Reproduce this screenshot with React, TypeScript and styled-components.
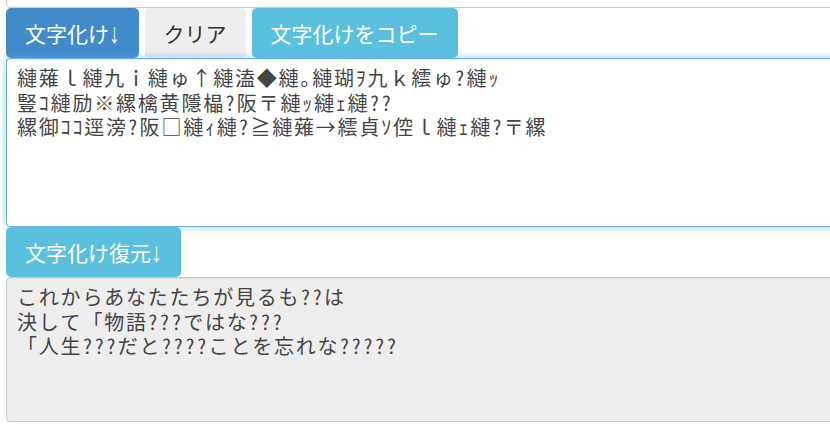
import React from "react";
import styled, { createGlobalStyle } from "styled-components";

const GlobalStyle = createGlobalStyle`
  html, body {
    margin: 0;
    padding: 0;
    overflow: hidden;
    background: #fff;
  }
`;

const Page = styled.div`
  display: flex;
  flex-direction: column;
  width: 900px;
  margin-top: -150px;
  padding-left: 6px;
  font-family: "Noto Sans CJK JP", "Noto Sans", sans-serif;
`;

const ButtonRow = styled.div`
  display: flex;
  gap: 6px;
`;

const variants = {
  primary: { bg: "#428bca", fg: "#fff" },
  default: { bg: "#eeeeee", fg: "#333" },
  info: { bg: "#5bc0de", fg: "#fff" },
};

const Button = styled.button<{ $variant: keyof typeof variants }>`
  display: flex;
  align-items: center;
  height: 50px;
  padding: 0 19px;
  border: none;
  border-radius: 5px;
  background: ${(p) => variants[p.$variant].bg};
  color: ${(p) => variants[p.$variant].fg};
  font-family: "Noto Sans CJK JP", sans-serif;
  font-size: 21px;
  white-space: nowrap;
  cursor: pointer;
`;

// the arrow is a narrow, tall glyph in the original font
const Arrow = styled.span`
  display: inline-block;
  font-family: "Liberation Sans", sans-serif;
  transform: translateY(1px) scaleY(1.35);
`;

const TextBox = styled.textarea<{ $focused?: boolean; $readOnlyLook?: boolean; $h: number }>`
  box-sizing: border-box;
  display: block;
  width: 100%;
  height: ${(p) => p.$h}px;
  margin: 0;
  padding: 7px 10px;
  border: 1px solid ${(p) => (p.$focused ? "#66afe9" : "#cccccc")};
  border-radius: 4px;
  outline: none;
  resize: vertical;
  background: ${(p) => (p.$readOnlyLook ? "#eeeeee" : "#fff")};
  color: #444;
  font-family: "Noto Sans Mono CJK JP", "Noto Sans CJK JP", monospace;
  font-size: 20px;
  letter-spacing: 1.8px;
  line-height: 24.5px;
  overflow: hidden;
  box-shadow: ${(p) =>
    p.$focused
      ? "inset 0 1px 1px rgba(0,0,0,.075), 0 0 10px rgba(102,175,233,.6)"
      : "inset 0 1px 1px rgba(0,0,0,.075)"};
`;

const garbled =
  "縺薙ｌ縺九ｉ縺ゅ↑縺溘◆縺｡縺瑚ｦ九ｋ繧ゅ?縺ｯ\n" +
  "豎ｺ縺励※縲檎黄隱橸?阪〒縺ｯ縺ｪ縺??\n" +
  "縲御ｺｺ逕滂?阪□縺ｨ縺?≧縺薙→繧貞ｿ倥ｌ縺ｪ縺?〒縲";

const restored =
  "これからあなたたちが見るも??は\n" +
  "決して「物語???ではな???\n" +
  "「人生???だと????ことを忘れな?????";

export default function App() {
  return (
    <>
      <GlobalStyle />
      <Page>
        <TextBox $h={158} readOnly value="" />
        <ButtonRow>
          <Button $variant="primary">
            文字化け<Arrow>↓</Arrow>
          </Button>
          <Button $variant="default">クリア</Button>
          <Button $variant="info">文字化けをコピー</Button>
        </ButtonRow>
        <TextBox $h={169} $focused readOnly value={garbled} />
        <ButtonRow>
          <Button $variant="info">
            文字化け復元<Arrow>↓</Arrow>
          </Button>
        </ButtonRow>
        <TextBox $h={145} $readOnlyLook readOnly value={restored} />
      </Page>
    </>
  );
}
